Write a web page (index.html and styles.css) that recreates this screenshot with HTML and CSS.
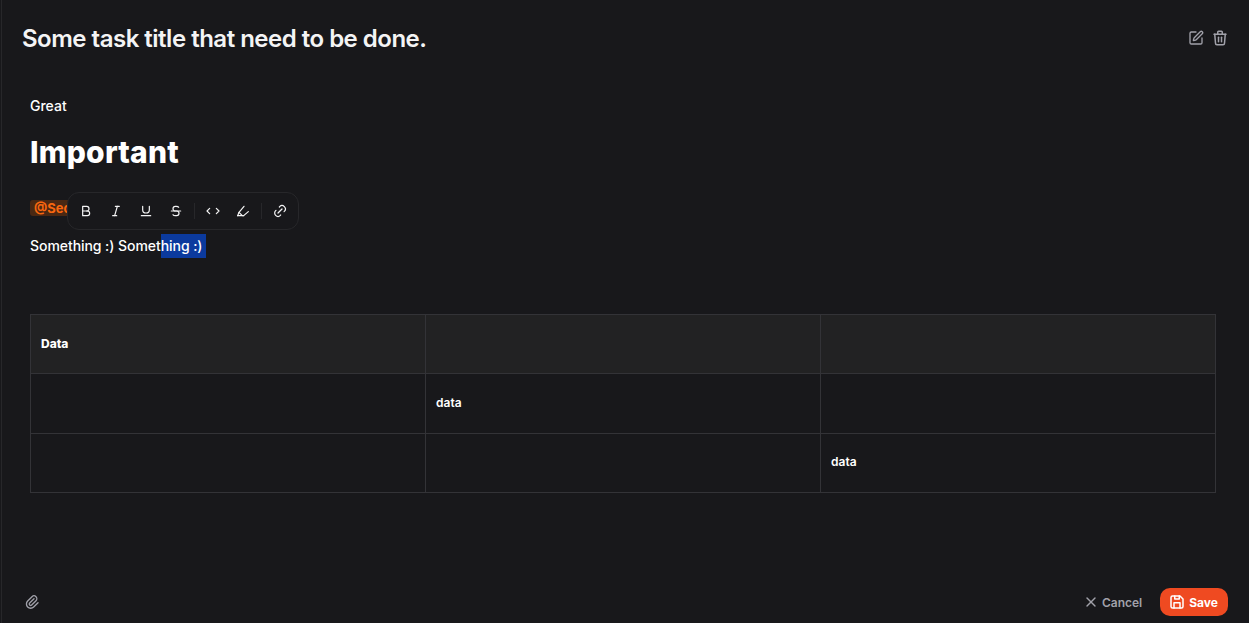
FILE: index.html
```html
<!DOCTYPE html>
<html>
<head>
    <title>Task</title>
    <link rel="stylesheet" href="styles.css">
</head>
<body>
    <div class="panel">
        <div class="header">
            <h1 class="title">Some task title that need to be done.</h1>
            <div class="actions">
                <svg class="head-icon edit-icon" viewBox="0 0 24 24"><path d="M12 3H5a2 2 0 0 0-2 2v14a2 2 0 0 0 2 2h14a2 2 0 0 0 2-2v-7"/><path d="M18.375 2.625a2.120 2.120 0 0 1 3 3l-9.013 9.014a2 2 0 0 1-.853.505l-2.873.84a.5.5 0 0 1-.62-.62l.84-2.873a2 2 0 0 1 .506-.852z"/></svg>
                <svg class="head-icon" viewBox="0 0 24 24"><path d="M4 7h16"/><path d="M10 11v6"/><path d="M14 11v6"/><path d="M5 7l1 12a2 2 0 0 0 2 2h8a2 2 0 0 0 2 -2l1 -12"/><path d="M9 7v-3a1 1 0 0 1 1 -1h4a1 1 0 0 1 1 1v3"/></svg>
            </div>
        </div>

        <div class="editor">
            <p class="line">Great</p>
            <h2 class="heading">Important</h2>
            <p class="line mention-line"><span class="mention">@Second</span></p>
            <p class="line tight">Something :) Somet<span class="selected">hing :) </span></p>

            <div class="bubble">
                <svg class="tool" viewBox="0 0 24 24"><path d="M7 5h6a3.500 3.500 0 0 1 0 7h-6z"/><path d="M13 12h1a3.500 3.500 0 0 1 0 7h-7v-7"/></svg>
                <svg class="tool" viewBox="0 0 24 24"><path d="M11 5l6 0"/><path d="M7 19l6 0"/><path d="M14 5l-4 14"/></svg>
                <svg class="tool" viewBox="0 0 24 24"><path d="M7 5v5a5 5 0 0 0 10 0v-5"/><path d="M5 19h14"/></svg>
                <svg class="tool" viewBox="0 0 24 24"><path d="M5 12h14"/><path d="M16 6.500a4 2 0 0 0 -4 -1.500h-1a3.500 3.500 0 0 0 0 7h2a3.500 3.500 0 0 1 0 7h-1.500a4 2 0 0 1 -4 -1.500"/></svg>
                <span class="sep"></span>
                <svg class="tool" viewBox="0 0 24 24"><path d="M7 8l-4 4l4 4"/><path d="M17 8l4 4l-4 4"/></svg>
                <svg class="tool" viewBox="0 0 24 24"><path d="M4 19h9"/><path d="M4 19l2 -5l7.500 -9"/><path d="M6 14l5 5"/><path d="M13 19l7 -6"/></svg>
                <span class="sep"></span>
                <svg class="tool" viewBox="0 0 24 24"><path d="M9 15l6 -6"/><path d="M11 6l.463 -.536a5 5 0 0 1 7.071 7.072l-.534 .464"/><path d="M13 18l-.397 .534a5.068 5.068 0 0 1 -7.127 0a4.972 4.972 0 0 1 0 -7.071l.524 -.463"/></svg>
            </div>

            <table class="grid">
                <tr>
                    <th>Data</th>
                    <th></th>
                    <th></th>
                </tr>
                <tr>
                    <td></td>
                    <td>data</td>
                    <td></td>
                </tr>
                <tr>
                    <td></td>
                    <td></td>
                    <td>data</td>
                </tr>
            </table>
        </div>

        <div class="footer">
            <svg class="icon" viewBox="0 0 24 24"><path d="M15 7l-6.500 6.500a1.500 1.500 0 0 0 3 3l6.500 -6.500a3 3 0 0 0 -6 -6l-6.500 6.500a4.500 4.500 0 0 0 9 9l6.500 -6.500"/></svg>
            <div class="buttons">
                <button class="cancel">
                    <svg class="btn-icon" viewBox="0 0 24 24"><path d="M18 6l-12 12"/><path d="M6 6l12 12"/></svg>
                    Cancel
                </button>
                <button class="save">
                    <svg class="save-icon" viewBox="0 0 24 24"><path d="M6 4h10l4 4v10a2 2 0 0 1 -2 2h-12a2 2 0 0 1 -2 -2v-12a2 2 0 0 1 2 -2"/><path d="M8 20v-7h8v7"/><path d="M15 4v4h-6v-4"/></svg>
                    Save
                </button>
            </div>
        </div>
    </div>
</body>
</html>
```

FILE: styles.css
```css
html, body {
    margin: 0;
    height: 100%;
    background-color: #18181b;
}
body {
    font-family: Inter, "Liberation Sans", sans-serif;
    color: #fff;
    overflow: hidden;
}
svg {
    fill: none;
    stroke: currentColor;
    stroke-width: 2;
    stroke-linecap: round;
    stroke-linejoin: round;
    display: block;
}
.panel {
    height: 623px;
    margin-left: 1px;
    border-left: 1px solid #27272a;
    display: flex;
    flex-direction: column;
    box-sizing: border-box;
}
.header {
    height: 76px;
    flex-shrink: 0;
    display: flex;
    align-items: center;
    justify-content: space-between;
    padding: 0 20px;
}
.title {
    margin: 0;
    font-size: 24px;
    font-weight: 600;
    letter-spacing: -0.5px;
    color: #f4f4f5;
}
.actions {
    display: flex;
    align-items: center;
    gap: 6px;
}
.head-icon {
    width: 18px;
    height: 18px;
    color: #a1a1aa;
}
.edit-icon {
    width: 16px;
    height: 16px;
    margin: 0 1px;
}
.icon {
    width: 16px;
    height: 16px;
    color: #a1a1aa;
}
.editor {
    flex: 1;
    position: relative;
    padding: 18px 33px 0 28px;
}
.line {
    margin: 0;
    font-size: 14px;
    font-weight: 500;
    line-height: 24px;
}
.tight {
    letter-spacing: -0.06px;
}
.heading {
    margin: 16px 0 0;
    font-size: 30px;
    font-weight: 800;
    line-height: 36px;
    letter-spacing: 0.2px;
}
.mention-line {
    margin-top: 26px;
    margin-bottom: 14px;
}
.mention {
    background-color: #4a2813;
    color: #f9670f;
    font-size: 13px;
    font-weight: 700;
    padding: 0 4px;
    border-radius: 3px;
}
.selected {
    background-color: #0b3a9e;
    display: inline-block;
    white-space: pre;
}
.bubble {
    position: absolute;
    left: 65px;
    top: 116px;
    height: 38px;
    box-sizing: border-box;
    padding: 0 10px;
    display: flex;
    align-items: center;
    gap: 14px;
    background-color: #18181b;
    border: 1px solid #27272a;
    border-radius: 12px;
}
.tool {
    width: 16px;
    height: 16px;
    stroke-width: 1.8;
    color: #f4f4f5;
}
.sep {
    width: 1px;
    height: 16px;
    margin: 0 -4px;
    background-color: #27272a;
}
.grid {
    margin-top: 56px;
    width: 100%;
    table-layout: fixed;
    border-collapse: collapse;
    font-size: 12px;
}
.grid th, .grid td {
    height: 59.4px;
    box-sizing: border-box;
    border: 1px solid #333337;
    padding: 0 10px 2px;
    text-align: left;
}
.grid th {
    background-color: #222223;
    font-weight: 800;
}
.grid td {
    font-weight: 600;
}
.footer {
    height: 44px;
    flex-shrink: 0;
    display: flex;
    align-items: center;
    justify-content: space-between;
    box-sizing: border-box;
    padding: 2px 21px 0 22px;
}
.buttons {
    display: flex;
    align-items: center;
    gap: 18px;
}
button {
    display: flex;
    align-items: center;
    font-family: inherit;
    font-size: 12px;
    font-weight: 600;
    border: none;
    cursor: pointer;
}
.btn-icon {
    width: 16px;
    height: 16px;
}
.save-icon {
    width: 18px;
    height: 18px;
}
.cancel {
    background: none;
    color: #a1a1aa;
    padding: 0;
    gap: 3px;
}
.save {
    background-color: #ef4a21;
    color: #fff;
    font-weight: 700;
    height: 28px;
    padding: 0 10px 0 8px;
    gap: 3px;
    border-radius: 10px;
}
```
